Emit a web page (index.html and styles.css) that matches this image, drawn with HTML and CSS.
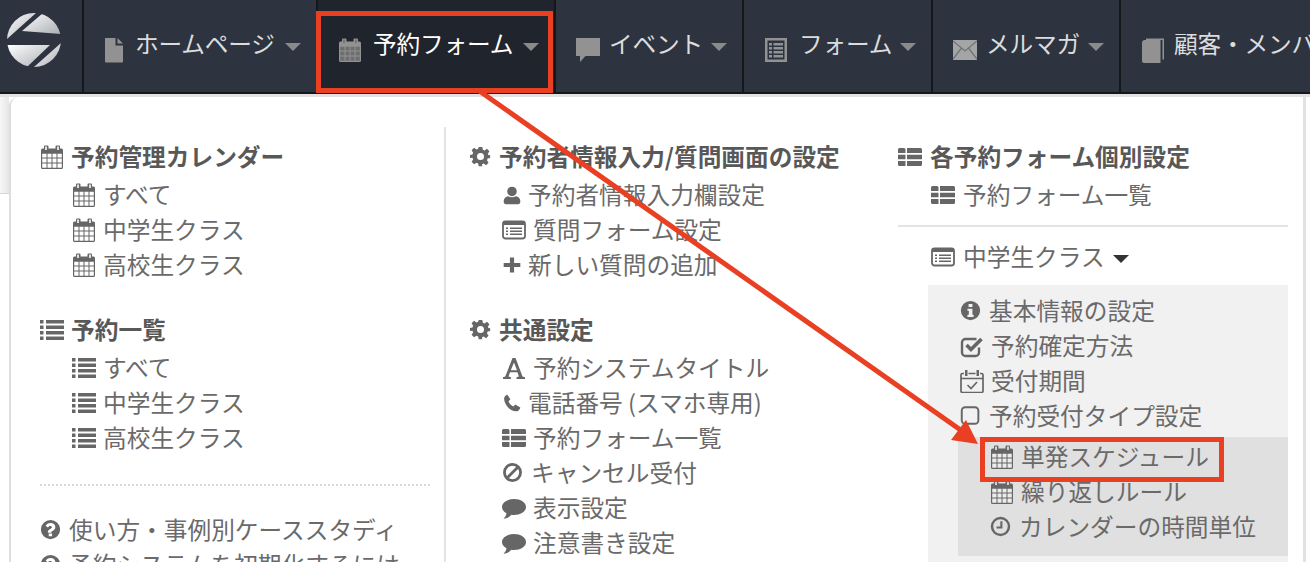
FILE: index.html
```html
<!DOCTYPE html>
<html lang="ja">
<head>
    <meta charset="UTF-8">
    <title>予約フォーム</title>
    <link rel="stylesheet" href="styles.css">
</head>
<body>
    <!-- Icon set -->
    <svg class="icon-defs" width="0" height="0">
        <defs>
            <linearGradient id="logo-fill" x1="0" y1="0" x2="1" y2="1">
                <stop offset="0" stop-color="#ffffff"/>
                <stop offset="1" stop-color="#a9adb2"/>
            </linearGradient>
            <clipPath id="logo-clip"><circle cx="27" cy="27" r="27"/></clipPath>
        </defs>
        <symbol id="i-cal" viewBox="0 0 24 24">
            <path fill="currentColor" d="M5 .5h2.500a1 1 0 0 1 1 1V3.500h7V1.500a1 1 0 0 1 1-1H19a1 1 0 0 1 1 1v2h1.500A1.500 1.500 0 0 1 23 5v17.500a1.500 1.500 0 0 1-1.500 1.500h-19A1.500 1.500 0 0 1 1 22.500V5a1.500 1.500 0 0 1 1.500-1.500H4v-2a1 1 0 0 1 1-1z"/>
            <path class="cal-hole" d="M2.200 8.800h4.300v3.800H2.200zM7.500 8.800h4v3.800h-4zM12.500 8.800h4v3.800h-4zM17.500 8.800h4.300v3.800h-4.300zM2.200 13.600h4.300v3.800H2.200zM7.500 13.600h4v3.800h-4zM12.500 13.600h4v3.800h-4zM17.500 13.600h4.300v3.800h-4.300zM2.200 18.400h4.300v4.400H2.200zM7.500 18.400h4v4.400h-4zM12.500 18.400h4v4.400h-4zM17.500 18.400h4.300v4.400h-4.300z"/>
            <path class="cal-hole" d="M5.200 1.500h1.600v3.500H5.200zM17.200 1.500h1.600v3.500h-1.600z"/>
        </symbol>
        <symbol id="i-list" viewBox="0 0 24 24">
            <path fill="currentColor" d="M0 3h3.500v3.500H0zM6 3h18v3.500H6zM0 8.500h3.500V12H0zM6 8.500h18V12H6zM0 14h3.500v3.500H0zM6 14h18v3.500H6zM0 19.500h3.500V23H0zM6 19.500h18V23H6z" transform="translate(0 -1)"/>
        </symbol>
        <symbol id="i-th" viewBox="0 0 24 24">
            <path fill="currentColor" d="M1.500 3H6a1.500 1.500 0 0 1 1.500 1.500v3.500H0V4.500A1.500 1.500 0 0 1 1.500 3zM9 3h13.500A1.500 1.500 0 0 1 24 4.500v3.500H9zM0 9.700h7.500v4.600H0zM9 9.700h15v4.600H9zM0 16h7.500v5H1.500A1.500 1.500 0 0 1 0 19.500zM9 16h15v3.500a1.500 1.500 0 0 1-1.500 1.500H9z"/>
        </symbol>
        <symbol id="i-gear" viewBox="0 0 24 24">
            <path fill="currentColor" fill-rule="evenodd" d="M10 1h4l.7 3.200 1.900.8 2.800-1.800 2.800 2.800-1.800 2.800.8 1.900L23 10.300v3.400l-2.800.7-.8 1.900 1.800 2.800-2.800 2.800-2.800-1.800-1.900.8L14 23h-4l-.7-3.100-1.900-.8-2.800 1.800-2.800-2.800 1.800-2.800-.8-1.900L0 13.700v-3.400l2.800-.7.800-1.900L1.800 4.900l2.800-2.800 2.800 1.800 1.900-.8zM12 8a4 4 0 1 0 0 8 4 4 0 0 0 0-8z"/>
        </symbol>
        <symbol id="i-user" viewBox="0 0 24 24">
            <path fill="currentColor" d="M12 2a5.500 5.500 0 1 1 0 11.500A5.500 5.500 0 0 1 12 2zM7.500 13.500c2.500 1.600 6.500 1.600 9 0 3.500.4 5.500 2.900 5.500 6v1A2.500 2.500 0 0 1 19.500 23h-15A2.500 2.500 0 0 1 2 20.500v-1c0-3.100 2-5.600 5.500-6z"/>
        </symbol>
        <symbol id="i-form" viewBox="0 0 24 24">
            <rect x="1" y="3.500" width="22" height="17" rx="2.500" fill="none" stroke="currentColor" stroke-width="1.800"/>
            <path fill="currentColor" d="M1 3.500h22V7H1zM4 9.500h2v1.500H4zM8 9.500h12v1.500H8zM4 12.500h2V14H4zM8 12.500h12V14H8zM4 15.500h2V17H4zM8 15.500h12V17H8z"/>
        </symbol>
        <symbol id="i-plus" viewBox="0 0 24 24">
            <path fill="currentColor" d="M9.500 3h5v6.500H22v5h-7.500V21h-5v-6.500H2v-5h7.500z"/>
        </symbol>
        <symbol id="i-font" viewBox="0 0 24 24">
            <path fill="currentColor" d="M10.500 2h3L20.500 20.500l2.500.7V23h-8.500v-1.800l2.400-.6-1.500-4.300H8l-1.500 4.300 2.400.6V23H1v-1.800l2.300-.7zM12 6.500 8.800 14.300h6.200z"/>
        </symbol>
        <symbol id="i-phone" viewBox="0 0 24 24">
            <path fill="currentColor" d="M6.500 2 10 7.500 7.800 10.200c1 2.400 3.300 4.900 5.800 6l2.400-2.300 6 3.400c-.5 2.800-2.700 4.700-5 4.700C9.500 22 3 14.500 2.500 7 2.400 4.600 4 2.600 6.500 2z"/>
        </symbol>
        <symbol id="i-ban" viewBox="0 0 24 24">
            <circle cx="12" cy="12" r="9.200" fill="none" stroke="currentColor" stroke-width="3.200"/>
            <path d="M6 18 18 6" stroke="currentColor" stroke-width="3.200"/>
        </symbol>
        <symbol id="i-comment" viewBox="0 0 24 24">
            <path fill="currentColor" d="M12 3c6.600 0 12 3.500 12 8s-5.400 8-12 8c-.9 0-1.700-.1-2.600-.2C7.600 21 4.600 22.500 1.500 22.800c1.600-1.500 2.800-3.200 3-5.500C1.800 15.900 0 13.600 0 11c0-4.500 5.400-8 12-8z"/>
        </symbol>
        <symbol id="i-info" viewBox="0 0 24 24">
            <path fill="currentColor" fill-rule="evenodd" d="M12 1a11 11 0 1 1 0 22 11 11 0 0 1 0-22zM9.800 4.500v3.600h4.400V4.500zM8.500 10v2.400h1.600v4.400H8.500v2.700h7v-2.700h-1.300V10z"/>
        </symbol>
        <symbol id="i-check" viewBox="0 0 24 24">
            <path fill="none" stroke="currentColor" stroke-width="2.400" d="M19 13.500v5A3.500 3.500 0 0 1 15.500 22h-10A3.500 3.500 0 0 1 2 18.500v-10A3.500 3.500 0 0 1 5.500 5h11"/>
            <path fill="none" stroke="currentColor" stroke-width="3.600" d="M6.500 11 11 15.500 21.500 5"/>
        </symbol>
        <symbol id="i-cal-check" viewBox="0 0 24 24">
            <path fill="none" stroke="currentColor" stroke-width="1.700" d="M4 4.500H2.500A1.500 1.500 0 0 0 1 6v16a1.500 1.500 0 0 0 1.500 1.500h19A1.500 1.500 0 0 0 23 22V6a1.500 1.500 0 0 0-1.500-1.500H20M8.500 4.500h7M1 9.500h22"/>
            <path fill="currentColor" d="M5 1h2.500v6H5zM16.500 1H19v6h-2.500z"/>
            <path fill="none" stroke="currentColor" stroke-width="1.700" d="M7.500 16 11 19.500 17 13"/>
        </symbol>
        <symbol id="i-square" viewBox="0 0 24 24">
            <rect x="2" y="2.500" width="19" height="19" rx="4" fill="none" stroke="currentColor" stroke-width="2.200"/>
        </symbol>
        <symbol id="i-clock" viewBox="0 0 24 24">
            <circle cx="12" cy="12" r="9.700" fill="none" stroke="currentColor" stroke-width="2.800"/>
            <path fill="none" stroke="currentColor" stroke-width="2.400" d="M13 6v7.200H7.500"/>
        </symbol>
        <symbol id="i-question" viewBox="0 0 24 24">
            <path fill="currentColor" fill-rule="evenodd" d="M12 1a11 11 0 1 1 0 22 11 11 0 0 1 0-22zM10 16.500v3.200h3.800v-3.200zM12 4.500c-2.800 0-4.500 1.400-5.500 3.200l2.500 1.900c.7-1 1.400-1.700 2.700-1.700 1 0 1.900.5 1.900 1.400 0 1.900-4.600 2.100-4.600 5.600v.7h3.800c0-2.100 4.700-2.200 4.700-6.500 0-3-2.900-4.600-5.500-4.600z"/>
        </symbol>
        <symbol id="n-file" viewBox="0 0 20 26">
            <path fill="currentColor" d="M1 1h10.500v7.500H19v16a1 1 0 0 1-1 1H2a1 1 0 0 1-1-1zM13.500 1 19 6.500h-5.500z"/>
        </symbol>
        <symbol id="n-chat" viewBox="0 0 24 24">
            <path fill="currentColor" d="M0 0h24v18H9.500L4 24v-6H0z"/>
        </symbol>
        <symbol id="n-form" viewBox="0 0 24 26">
            <path fill="currentColor" fill-rule="evenodd" d="M1 1h22v24H1zM3.500 3.500v19h17v-19zM5 6h3v2.500H5zM9.500 6H19v2.500H9.500zM5 10h3v2.500H5zM9.500 10H19v2.500H9.500zM5 14h3v2.500H5zM9.500 14H19v2.500H9.500zM5 18h3v2.500H5zM9.500 18H19v2.500H9.500z"/>
        </symbol>
        <symbol id="n-mail" viewBox="0 0 24 20">
            <path fill="#a4a6a6" d="M0 0h24v20H0z"/>
            <path fill="none" stroke="#6f7276" stroke-width="1.300" d="M0 1 12 11 24 1M0 19l8.500-11M24 19 15.500 8"/>
        </symbol>
        <symbol id="n-book" viewBox="0 0 24 26">
            <path fill="currentColor" d="M5 1.500h18v21h-1.500V3H5z"/>
            <path fill="currentColor" d="M4 3h15.500v23H3a2 2 0 0 1-2-2V6a3 3 0 0 1 3-3z"/>
        </symbol>
    </svg>

    <!-- Top navigation -->
    <nav class="topnav">
        <a class="logo-cell">
            <svg class="logo" width="54" height="54" viewBox="0 0 54 54">
                <g clip-path="url(#logo-clip)" fill="url(#logo-fill)">
                    <path d="M29 0 0 26V0z"/>
                    <path d="M36 0 15 18 54 21V0z"/>
                    <path d="M0 32h43L20 54H0z"/>
                    <path d="M54 30 27 54h27z"/>
                </g>
            </svg>
        </a>
        <a class="nav-item nav-home">
            <svg class="nav-icon nav-file"><use href="#n-file"/></svg>
            <span>ホームページ</span><i class="nav-caret"></i>
        </a>
        <a class="nav-item nav-booking is-active">
            <svg class="nav-icon"><use href="#i-cal"/></svg>
            <span>予約フォーム</span><i class="nav-caret"></i>
        </a>
        <a class="nav-item nav-short">
            <svg class="nav-icon"><use href="#n-chat"/></svg>
            <span>イベント</span><i class="nav-caret"></i>
        </a>
        <a class="nav-item nav-forms">
            <svg class="nav-icon"><use href="#n-form"/></svg>
            <span>フォーム</span><i class="nav-caret"></i>
        </a>
        <a class="nav-item nav-short">
            <svg class="nav-icon"><use href="#n-mail"/></svg>
            <span>メルマガ</span><i class="nav-caret"></i>
        </a>
        <a class="nav-item nav-last">
            <svg class="nav-icon"><use href="#n-book"/></svg>
            <span>顧客・メンバー</span>
        </a>
    </nav>

    <div class="page-strip"></div>

    <!-- Dropdown menu -->
    <div class="mega-menu">
        <div class="menu-col col-first">
            <h4 class="menu-head"><svg class="ico"><use href="#i-cal"/></svg>予約管理カレンダー</h4>
            <ul class="menu-list">
                <li><svg class="ico"><use href="#i-cal"/></svg>すべて</li>
                <li><svg class="ico"><use href="#i-cal"/></svg>中学生クラス</li>
                <li><svg class="ico"><use href="#i-cal"/></svg>高校生クラス</li>
            </ul>
            <h4 class="menu-head"><svg class="ico"><use href="#i-list"/></svg>予約一覧</h4>
            <ul class="menu-list">
                <li><svg class="ico"><use href="#i-list"/></svg>すべて</li>
                <li><svg class="ico"><use href="#i-list"/></svg>中学生クラス</li>
                <li><svg class="ico"><use href="#i-list"/></svg>高校生クラス</li>
            </ul>
            <hr class="dotted">
            <ul class="menu-list help-list">
                <li><svg class="ico ico-sm"><use href="#i-question"/></svg>使い方・事例別ケーススタディ</li>
                <li><svg class="ico ico-sm"><use href="#i-question"/></svg>予約システムを初期化するには</li>
            </ul>
        </div>

        <div class="menu-col col-second">
            <h4 class="menu-head"><svg class="ico ico-sm"><use href="#i-gear"/></svg>予約者情報入力/質問画面の設定</h4>
            <ul class="menu-list">
                <li><svg class="ico ico-tight"><use href="#i-user"/></svg>予約者情報入力欄設定</li>
                <li><svg class="ico"><use href="#i-form"/></svg>質問フォーム設定</li>
                <li><svg class="ico ico-tight"><use href="#i-plus"/></svg>新しい質問の追加</li>
            </ul>
            <h4 class="menu-head"><svg class="ico ico-sm"><use href="#i-gear"/></svg>共通設定</h4>
            <ul class="menu-list">
                <li><svg class="ico"><use href="#i-font"/></svg>予約システムタイトル</li>
                <li><svg class="ico ico-tight"><use href="#i-phone"/></svg>電話番号 (スマホ専用)</li>
                <li><svg class="ico"><use href="#i-th"/></svg>予約フォーム一覧</li>
                <li><svg class="ico ico-sm"><use href="#i-ban"/></svg>キャンセル受付</li>
                <li><svg class="ico"><use href="#i-comment"/></svg>表示設定</li>
                <li><svg class="ico"><use href="#i-comment"/></svg>注意書き設定</li>
            </ul>
        </div>

        <div class="menu-col col-third">
            <h4 class="menu-head"><svg class="ico"><use href="#i-th"/></svg>各予約フォーム個別設定</h4>
            <ul class="menu-list">
                <li><svg class="ico"><use href="#i-th"/></svg>予約フォーム一覧</li>
            </ul>
            <hr class="solid">
            <ul class="menu-list">
                <li><svg class="ico"><use href="#i-form"/></svg>中学生クラス<i class="open-caret"></i></li>
            </ul>
            <div class="form-box">
                <ul class="menu-list">
                    <li><svg class="ico ico-sm"><use href="#i-info"/></svg>基本情報の設定</li>
                    <li><svg class="ico"><use href="#i-check"/></svg>予約確定方法</li>
                    <li><svg class="ico"><use href="#i-cal-check"/></svg>受付期間</li>
                    <li><svg class="ico ico-sm"><use href="#i-square"/></svg>予約受付タイプ設定</li>
                </ul>
                <ul class="menu-list sub-box">
                    <li><svg class="ico"><use href="#i-cal"/></svg>単発スケジュール</li>
                    <li><svg class="ico"><use href="#i-cal"/></svg>繰り返しルール</li>
                    <li><svg class="ico ico-sm"><use href="#i-clock"/></svg>カレンダーの時間単位</li>
                </ul>
            </div>
        </div>
    </div>

    <!-- Red annotations on top of the screenshot -->
    <svg class="annotations" width="1310" height="562" viewBox="0 0 1310 562">
        <rect x="318.500" y="13.500" width="232" height="77" fill="none" stroke="#e93f23" stroke-width="5"/>
        <rect x="982.500" y="439.500" width="239" height="40" fill="none" stroke="#e93f23" stroke-width="5"/>
        <path d="M478 90 962 431" stroke="#e93f23" stroke-width="5" fill="none"/>
        <path d="M978 444 951 440 966 420z" fill="#e93f23"/>
    </svg>
</body>
</html>
```

FILE: styles.css
```css
/* General Styles */

html, body {
    height: 562px;
    overflow: hidden;
}

body {
    margin: 0;
    background-color: #fff;
    color: #6a6a6a;
    font-family: "Noto Sans CJK JP", "Noto Sans", sans-serif;
    font-size: 23.7px;
    position: relative;
}

.icon-defs {
    position: absolute;
}

.cal-hole {
    fill: var(--hole, #fff);
}

/* Top navigation */

.topnav {
    display: flex;
    height: 92px;
    background-color: #2d343f;
    border-bottom: 2px solid #14171b;
    box-shadow: 0 3px 0 #e2e2e2;
    overflow: hidden;
    white-space: nowrap;
}

.logo-cell {
    flex: none;
    width: 82px;
    border-right: 2px solid #14171b;
}

.logo {
    display: block;
    margin: 13px 0 0 7px;
}

.nav-item {
    --hole: #6e6e6e;
    flex: none;
    display: flex;
    align-items: flex-start;
    padding: 0 15px 0 20px;
    box-sizing: border-box;
    color: #dcdcdc;
    border-right: 2px solid #14171b;
    line-height: 86px;
}

.nav-home { width: 234px; }
.nav-booking { width: 238px; }
.nav-short { width: 188px; }
.nav-forms { width: 189px; }

.nav-item span {
    margin-left: 11px;
    letter-spacing: -0.2px;
}

.nav-short span,
.nav-last span {
    margin-left: 9px;
}

.nav-icon {
    flex: none;
    width: 24px;
    height: 26px;
    margin-top: 37px;
    color: #929292;
}

.nav-file {
    width: 20px;
}

.nav-item.is-active {
    background-color: #20242c;
    color: #fff;
}

.nav-caret {
    flex: none;
    margin: 43px 0 0 auto;
    border-top: 8px solid #8a8a8a;
    border-left: 8px solid transparent;
    border-right: 8px solid transparent;
    height: 0;
}

.page-strip {
    position: absolute;
    left: 0;
    top: 97px;
    width: 9px;
    height: 96px;
    background: linear-gradient(to right, #f7f7f7, #e6e6e6);
    border-bottom: 1px solid #d4d4d4;
}

/* Dropdown menu */

.mega-menu {
    position: absolute;
    left: 9px;
    top: 97px;
    width: 1263px;
    height: 465px;
    display: flex;
    padding-left: 29px;
    background-color: #fff;
    border-left: 2px solid #dedede;
    border-right: 3px solid #e2e2e2;
    border-top-left-radius: 9px;
    overflow: hidden;
}

.menu-col {
    box-sizing: border-box;
    margin-top: 30px;
    padding-top: 12px;
}

.col-first {
    width: 390px;
    margin-right: 14px;
}

.col-second {
    width: 454px;
    padding-left: 24px;
    border-left: 2px solid #e4e4e4;
}

.col-third {
    width: 390px;
}

.menu-head {
    display: flex;
    align-items: center;
    height: 35px;
    margin: 0 0 3px;
    font-size: 23.7px;
    font-weight: 700;
    line-height: 35px;
    color: #585858;
}

.menu-list {
    list-style: none;
    margin: 0 0 30px;
    padding: 0 0 0 32px;
}

.menu-list li {
    display: flex;
    align-items: center;
    height: 35px;
    line-height: 35px;
    white-space: nowrap;
}

.ico {
    flex: none;
    width: 24px;
    height: 24px;
    margin-right: 7px;
    color: #666;
}

.ico-sm {
    width: 21px;
    height: 21px;
    margin-right: 8px;
}

.ico-tight {
    width: 20px;
    height: 20px;
    margin-right: 6px;
}

.dotted {
    margin: -1px 0 26px;
    border: 0;
    border-top: 2px dotted #d9d9d9;
}

.help-list {
    padding-left: 0;
}

.solid {
    margin: -17px 0 12px;
    border: 0;
    border-top: 2px solid #e4e4e4;
}

.col-third .menu-list {
    margin-bottom: 0;
}

.col-third > .menu-list:first-of-type {
    margin-bottom: 30px;
}

.col-third > .menu-head .ico,
.col-third > .menu-list .ico {
    margin-right: 8px;
}

.col-third > .menu-list {
    padding-left: 33px;
}

.open-caret {
    margin: 4px 0 0 8px;
    border-top: 8px solid #333;
    border-left: 8px solid transparent;
    border-right: 8px solid transparent;
}

.form-box {
    margin: 11px 0 0 30px;
    padding: 8px 0 0;
    height: 300px;
    background-color: #f1f1f1;
}

.col-third .form-box .menu-list {
    padding-left: 32px;
}

.col-third .form-box .sub-box {
    --hole: #ececec;
    margin: 4px 0 0 30px;
    padding: 2px 0 12px 32px;
    background-color: #e0e0e0;
}

/* Annotations */

.annotations {
    position: absolute;
    left: 0;
    top: 0;
}
```
